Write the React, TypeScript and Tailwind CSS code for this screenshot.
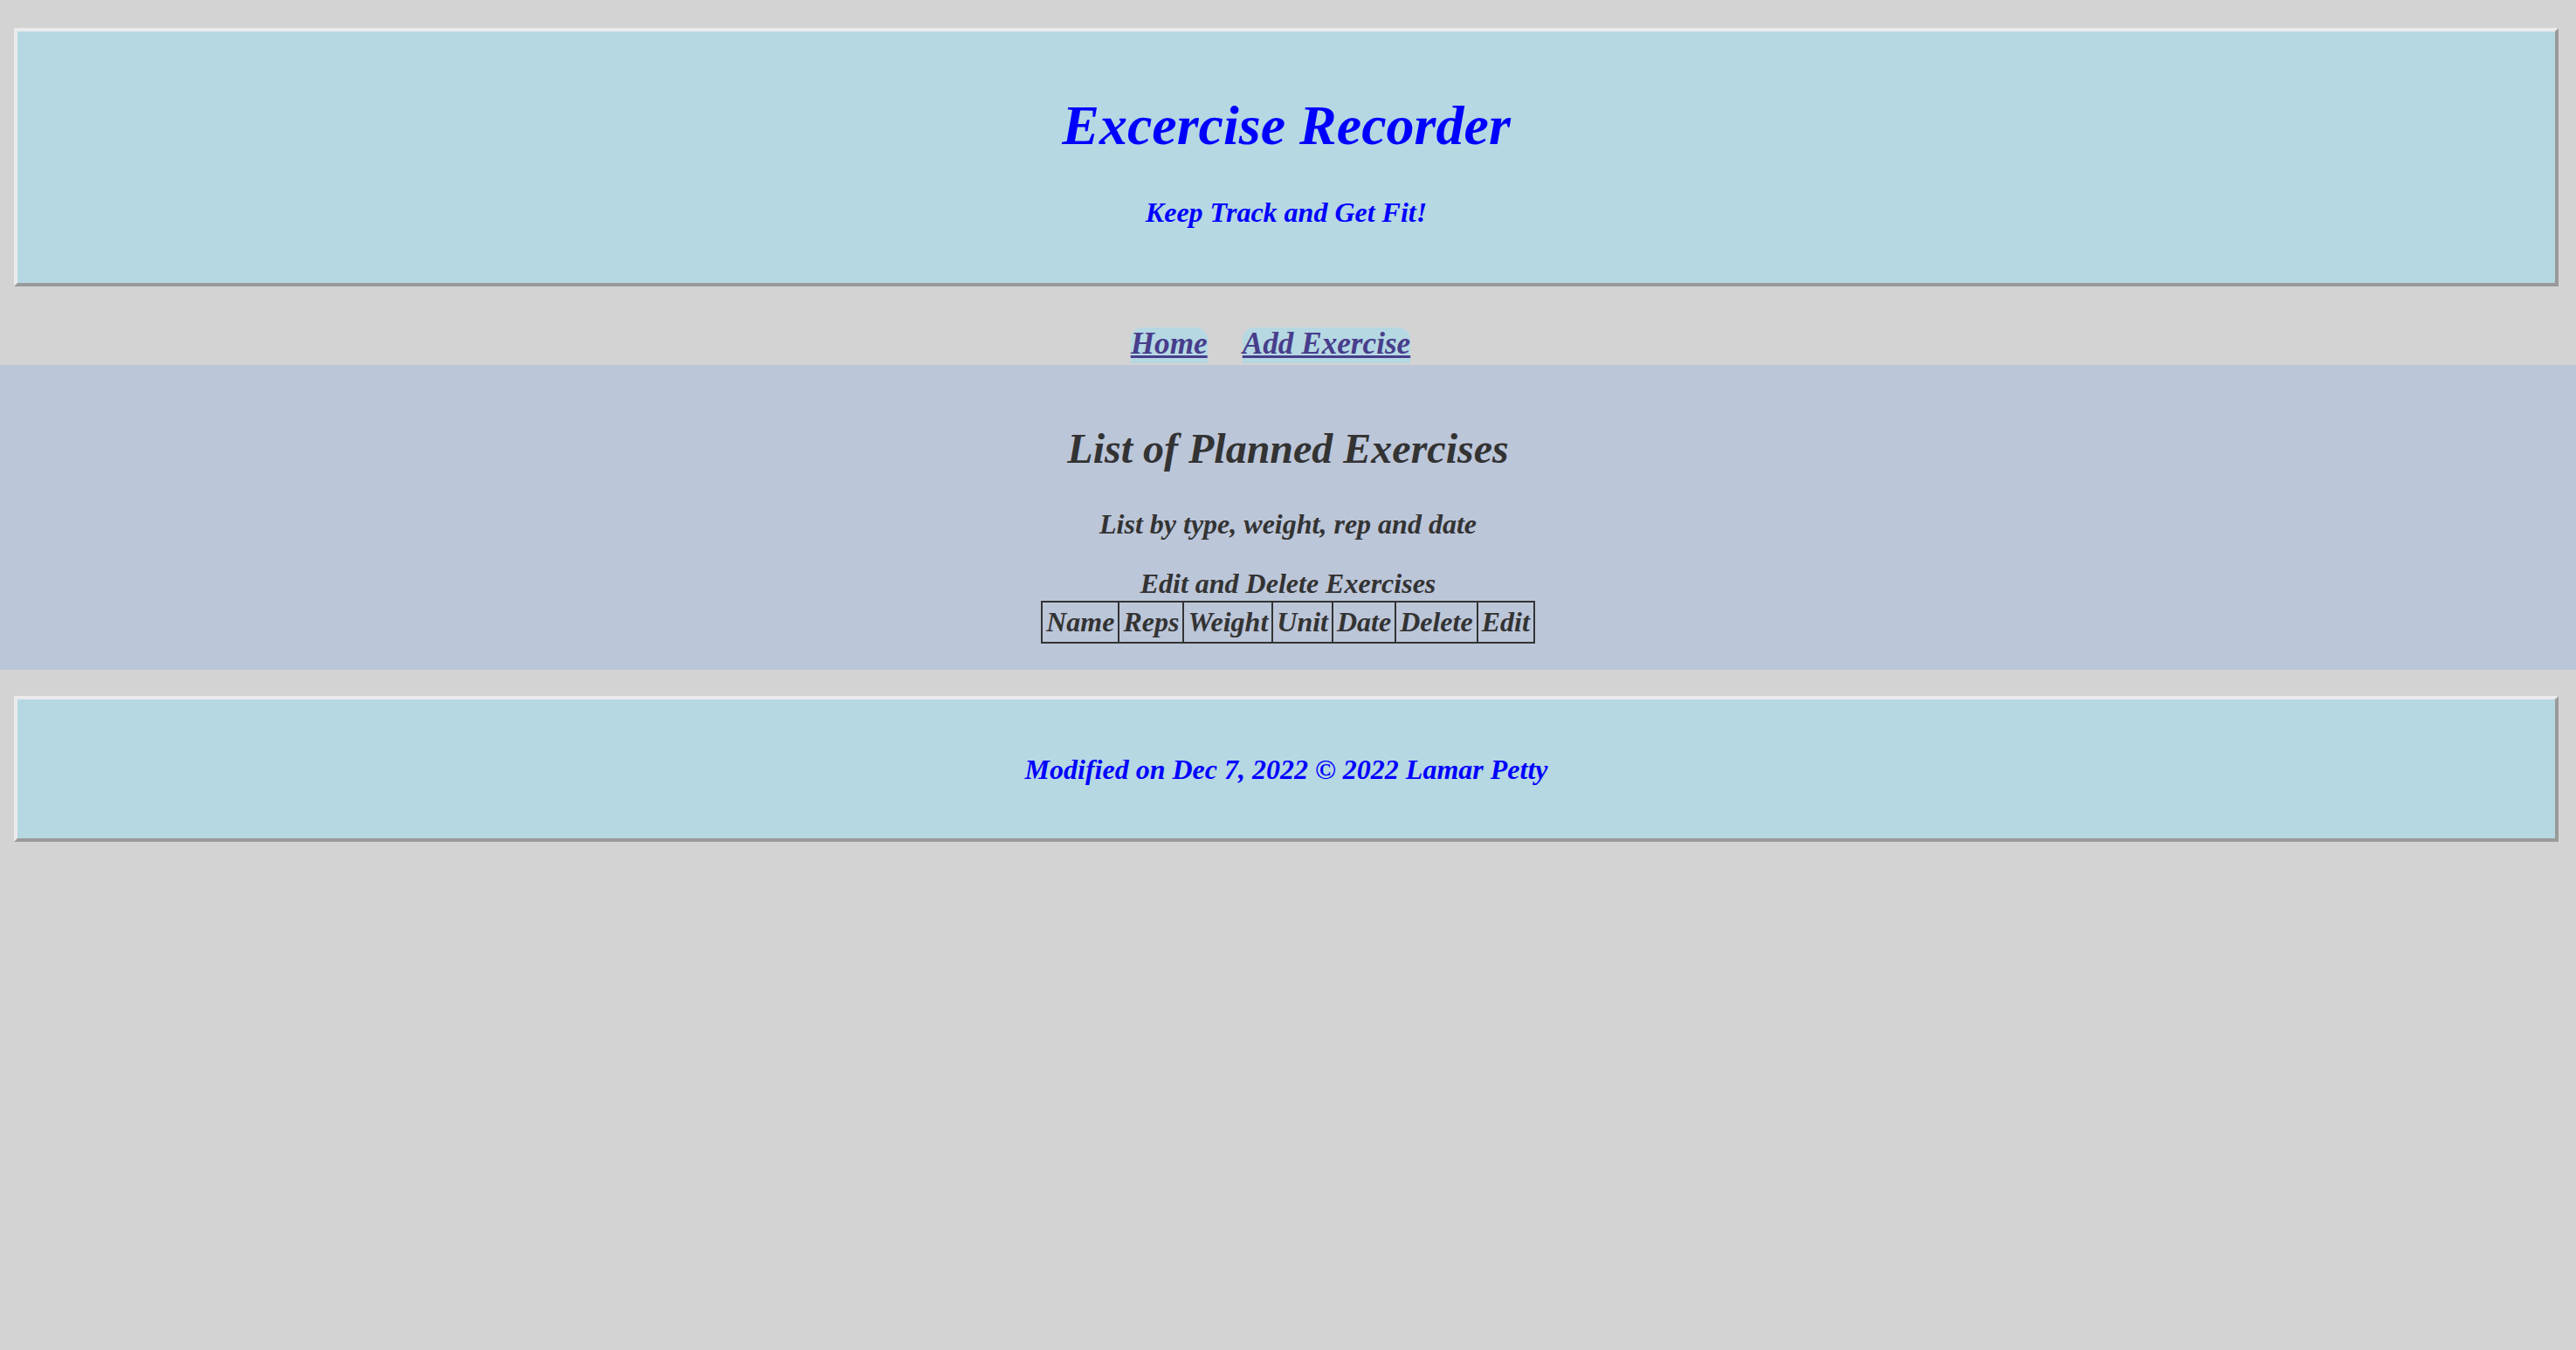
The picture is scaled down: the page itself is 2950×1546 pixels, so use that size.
const columns = ["Name", "Reps", "Weight", "Unit", "Date", "Delete", "Edit"];

const App = () => {
  return (
    <div className="min-h-screen bg-[#d3d3d3] pt-8 font-['Liberation_Serif',serif] font-bold italic">
      {/* header */}
      <header className="ml-4 mr-5 h-[296px] border-4 border-t-[#ebebeb] border-l-[#ebebeb] border-b-[#9a9a9a] border-r-[#9a9a9a] bg-[#b5d8e3] pt-[76px] text-center text-[#0000ff]">
        <h1 className="text-[64px] leading-none">Excercise Recorder</h1>
        <p className="mt-[51px] text-[32px] leading-none">Keep Track and Get Fit!</p>
      </header>

      {/* nav */}
      <nav className="h-[90px] pt-[47px] text-center text-[35.2px] leading-none">
        <a href="#" className="mr-10 inline-block h-[41px] rounded-t-[14px] bg-[#b5d8e3] pt-px align-top text-[#483d8b] underline">
          Home
        </a>
        <a href="#" className="mr-10 inline-block h-[41px] rounded-t-[14px] bg-[#b5d8e3] pt-px align-top text-[#483d8b] underline">
          Add Exercise
        </a>
      </nav>

      {/* main */}
      <main className="flex flex-col items-center bg-[#bcc6d9] pt-[72px] pb-[30px] text-[#333333]">
        <h2 className="text-[48px] leading-none">List of Planned Exercises</h2>
        <p className="mt-[46px] text-[32px] leading-none">List by type, weight, rep and date</p>
        <p className="mt-9 text-[32px] leading-none">Edit and Delete Exercises</p>
        <table className="mt-1 border-collapse border-2 border-[#333333] text-[32px]">
          <thead>
            <tr>
              {columns.map((c) => (
                <th key={c} className="border-2 border-[#333333] px-1 py-1 font-bold leading-[1.15]">
                  {c}
                </th>
              ))}
            </tr>
          </thead>
          <tbody></tbody>
        </table>
      </main>

      {/* footer */}
      <footer className="ml-4 mr-5 mt-[30px] h-[167px] border-4 border-t-[#ebebeb] border-l-[#ebebeb] border-b-[#9a9a9a] border-r-[#9a9a9a] bg-[#b5d8e3] pt-16 text-center text-[32px] leading-none text-[#0000ff]">
        <p>Modified on Dec 7, 2022 © 2022 Lamar Petty</p>
      </footer>
    </div>
  );
};

export default App;
